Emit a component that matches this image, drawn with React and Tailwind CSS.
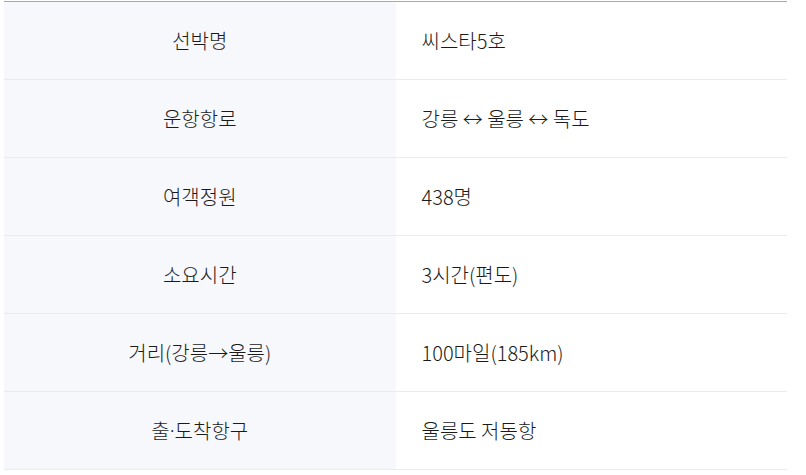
import React from "react";

const rows = [
  ["선박명", "씨스타5호"],
  ["운항항로", "강릉 ↔ 울릉 ↔ 독도"],
  ["여객정원", "438명"],
  ["소요시간", "3시간(편도)"],
  ["거리(강릉→울릉)", "100마일(185km)"],
  [
    <>
      출<span className="font-['Noto_Sans',sans-serif]">·</span>도착항구
    </>,
    "울릉도 저동항",
  ],
];

const App = () => {
  return (
    <div className="w-[806px] h-[475px] bg-white pt-px pl-1 pr-[19px] font-['Noto_Sans_CJK_KR','Noto_Sans',sans-serif] text-[20px] font-light text-[#1a1a1a]">
      <div className="border-t border-[#a9a9a9]">
        {rows.map(([label, value], i) => (
          <div key={i} className="grid grid-cols-2 h-[78px] border-b border-[#ebebeb]">
            <div className="flex items-center justify-center bg-[#f7f8fc]">
              {label}
            </div>
            <div className="flex items-center pl-[26px]">{value}</div>
          </div>
        ))}
      </div>
    </div>
  );
};

export default App;
